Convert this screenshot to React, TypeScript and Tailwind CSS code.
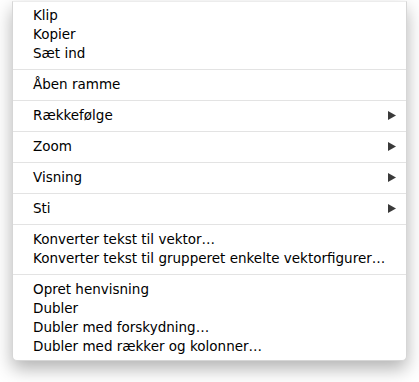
import React from "react";

type Item = { label: string; sub?: boolean } | "sep";

const items: Item[] = [
  { label: "Klip" },
  { label: "Kopier" },
  { label: "Sæt ind" },
  "sep",
  { label: "Åben ramme" },
  "sep",
  { label: "Rækkefølge", sub: true },
  "sep",
  { label: "Zoom", sub: true },
  "sep",
  { label: "Visning", sub: true },
  "sep",
  { label: "Sti", sub: true },
  "sep",
  { label: "Konverter tekst til vektor…" },
  { label: "Konverter tekst til grupperet enkelte vektorfigurer…" },
  "sep",
  { label: "Opret henvisning" },
  { label: "Dubler" },
  { label: "Dubler med forskydning…" },
  { label: "Dubler med rækker og kolonner…" },
];

export default function App() {
  return (
    <div className="w-[419px] h-[382px] bg-white pl-[12px] pt-[1px] overflow-hidden">
      <div
        className="w-[395px] bg-white rounded-b-[5px] border-x border-b border-t border-[#d6d6d6] border-t-[#ececec] py-[4px] shadow-[0_8px_18px_rgba(0,0,0,0.3)] text-[13.5px] text-black"
        style={{ fontFamily: '"Lucida Grande", "DejaVu Sans", sans-serif' }}
      >
        {items.map((it, i) =>
          it === "sep" ? (
            <div key={i} className="h-[12px] flex items-center">
              <div className="w-full h-px bg-[#e3e3e3]" />
            </div>
          ) : (
            <div key={i} className="h-[19px] flex items-center justify-between pl-[20px] pr-[10px] leading-none">
              <span>{it.label}</span>
              {it.sub && (
                <svg width="8" height="9" viewBox="0 0 8 9" className="text-[#3a3a3a]">
                  <path d="M0 0 L8 4.5 L0 9 Z" fill="currentColor" />
                </svg>
              )}
            </div>
          )
        )}
      </div>
    </div>
  );
}
